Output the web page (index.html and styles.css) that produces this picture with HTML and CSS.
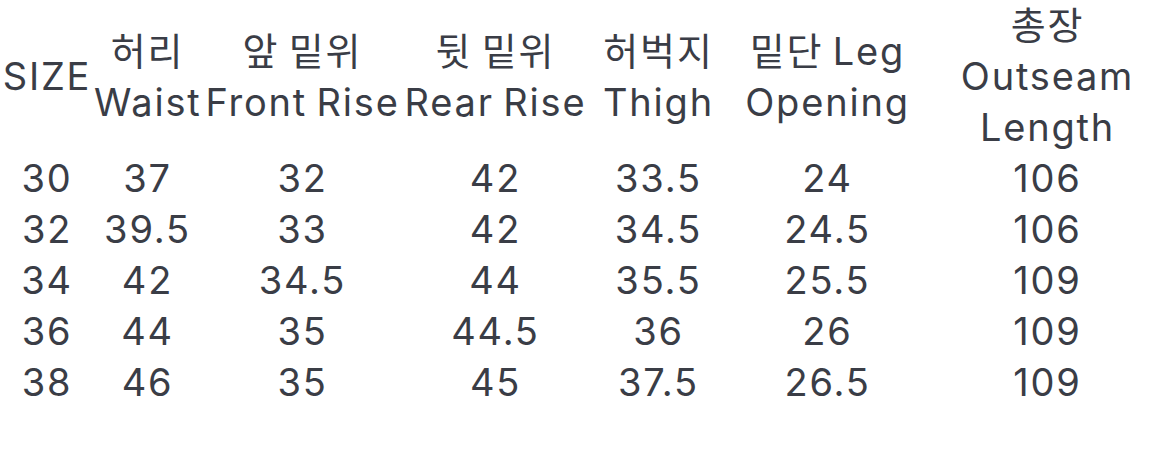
FILE: index.html
```html
<!DOCTYPE html>
<html lang="ko">
<head>
<meta charset="utf-8">
<title>Size chart</title>
<link rel="stylesheet" href="styles.css">
</head>
<body>
<table class="size-table">
  <colgroup>
    <col class="c1"><col class="c2"><col class="c3"><col class="c4"><col class="c5"><col class="c6"><col class="c7">
  </colgroup>
  <thead>
    <tr>
      <th>SIZE</th>
      <th>허리<br>Waist</th>
      <th>앞 밑위<br>Front Rise</th>
      <th>뒷 밑위<br>Rear Rise</th>
      <th>허벅지<br>Thigh</th>
      <th>밑단 Leg<br>Opening</th>
      <th>총장<br>Outseam<br>Length</th>
    </tr>
  </thead>
  <tbody>
    <tr><td>30</td><td>37</td><td>32</td><td>42</td><td>33.5</td><td>24</td><td>106</td></tr>
    <tr><td>32</td><td>39.5</td><td>33</td><td>42</td><td>34.5</td><td>24.5</td><td>106</td></tr>
    <tr><td>34</td><td>42</td><td>34.5</td><td>44</td><td>35.5</td><td>25.5</td><td>109</td></tr>
    <tr><td>36</td><td>44</td><td>35</td><td>44.5</td><td>36</td><td>26</td><td>109</td></tr>
    <tr><td>38</td><td>46</td><td>35</td><td>45</td><td>37.5</td><td>26.5</td><td>109</td></tr>
  </tbody>
</table>
</body>
</html>
```
FILE: styles.css
```css
html, body {
  margin: 0;
  padding: 0;
  background: #ffffff;
}
body {
  font-family: "Inter", "Noto Sans CJK KR", sans-serif;
  color: #3a3d46;
}
.size-table {
  width: 1169px;
  table-layout: fixed;
  border-collapse: collapse;
  border-spacing: 0;
  font-size: 38px;
  line-height: 51px;
  letter-spacing: 1.8px;
  word-spacing: -3px;
}
.size-table th,
.size-table td {
  padding: 0 0 0 1px;
  text-align: center;
  vertical-align: middle;
  font-weight: 400;
  white-space: nowrap;
}
.c1 { width: 93px; }
.c2 { width: 108px; }
.c3 { width: 202px; }
.c4 { width: 184px; }
.c5 { width: 142px; }
.c6 { width: 196px; }
.c7 { width: 244px; }
```
